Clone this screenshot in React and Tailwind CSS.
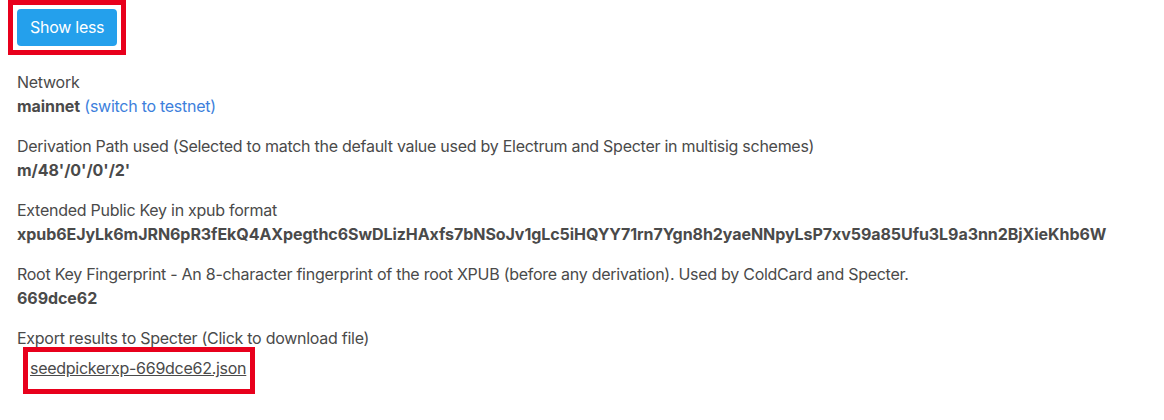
export default function App() {
  const rows = [
    {
      label: "Derivation Path used (Selected to match the default value used by Electrum and Specter in multisig schemes)",
      value: "m/48'/0'/0'/2'",
    },
    {
      label: "Extended Public Key in xpub format",
      value:
        "xpub6EJyLk6mJRN6pR3fEkQ4AXpegthc6SwDLizHAxfs7bNSoJv1gLc5iHQYY71rn7Ygn8h2yaeNNpyLsP7xv59a85Ufu3L9a3nn2BjXieKhb6W",
    },
    {
      label: "Root Key Fingerprint - An 8-character fingerprint of the root XPUB (before any derivation). Used by ColdCard and Specter.",
      value: "669dce62",
    },
  ];

  return (
    <div
      className="min-h-[420px] bg-white text-[16px] leading-6 tracking-[-0.27px] text-[#4a4a4a]"
      style={{ fontFamily: 'Inter, "Liberation Sans", Arial, sans-serif' }}
    >
      <div className="pl-[8px]">
        <div className="inline-block border-[5px] border-[#e8001c] p-[4px]">
          <button className="h-[37px] rounded-[4px] bg-[#24a0ec] px-[13px] pb-[2px] text-[16px] text-white">
            Show less
          </button>
        </div>
      </div>

      <div className="mt-[15px] pl-[17px]">
        <div className="mb-4">
          <div>Network</div>
          <div>
            <span className="font-bold tracking-[-0.06px]">mainnet</span>{" "}
            <a className="cursor-pointer text-[#3d7fdc]">(switch to testnet)</a>
          </div>
        </div>

        {rows.map((r) => (
          <div key={r.value} className="mb-4">
            <div>{r.label}</div>
            <div className="font-bold tracking-[-0.06px]">{r.value}</div>
          </div>
        ))}

        <div>
          <div>Export results to Specter (Click to download file)</div>
          <div className="-mt-[3px] ml-[6px] inline-block border-[5px] border-[#e8001c] pb-[9px] pl-[2px] pr-[4px] pt-[4px]">
            <a className="cursor-pointer text-[#4a4a4a] underline">seedpickerxp-669dce62.json</a>
          </div>
        </div>
      </div>
    </div>
  );
}
